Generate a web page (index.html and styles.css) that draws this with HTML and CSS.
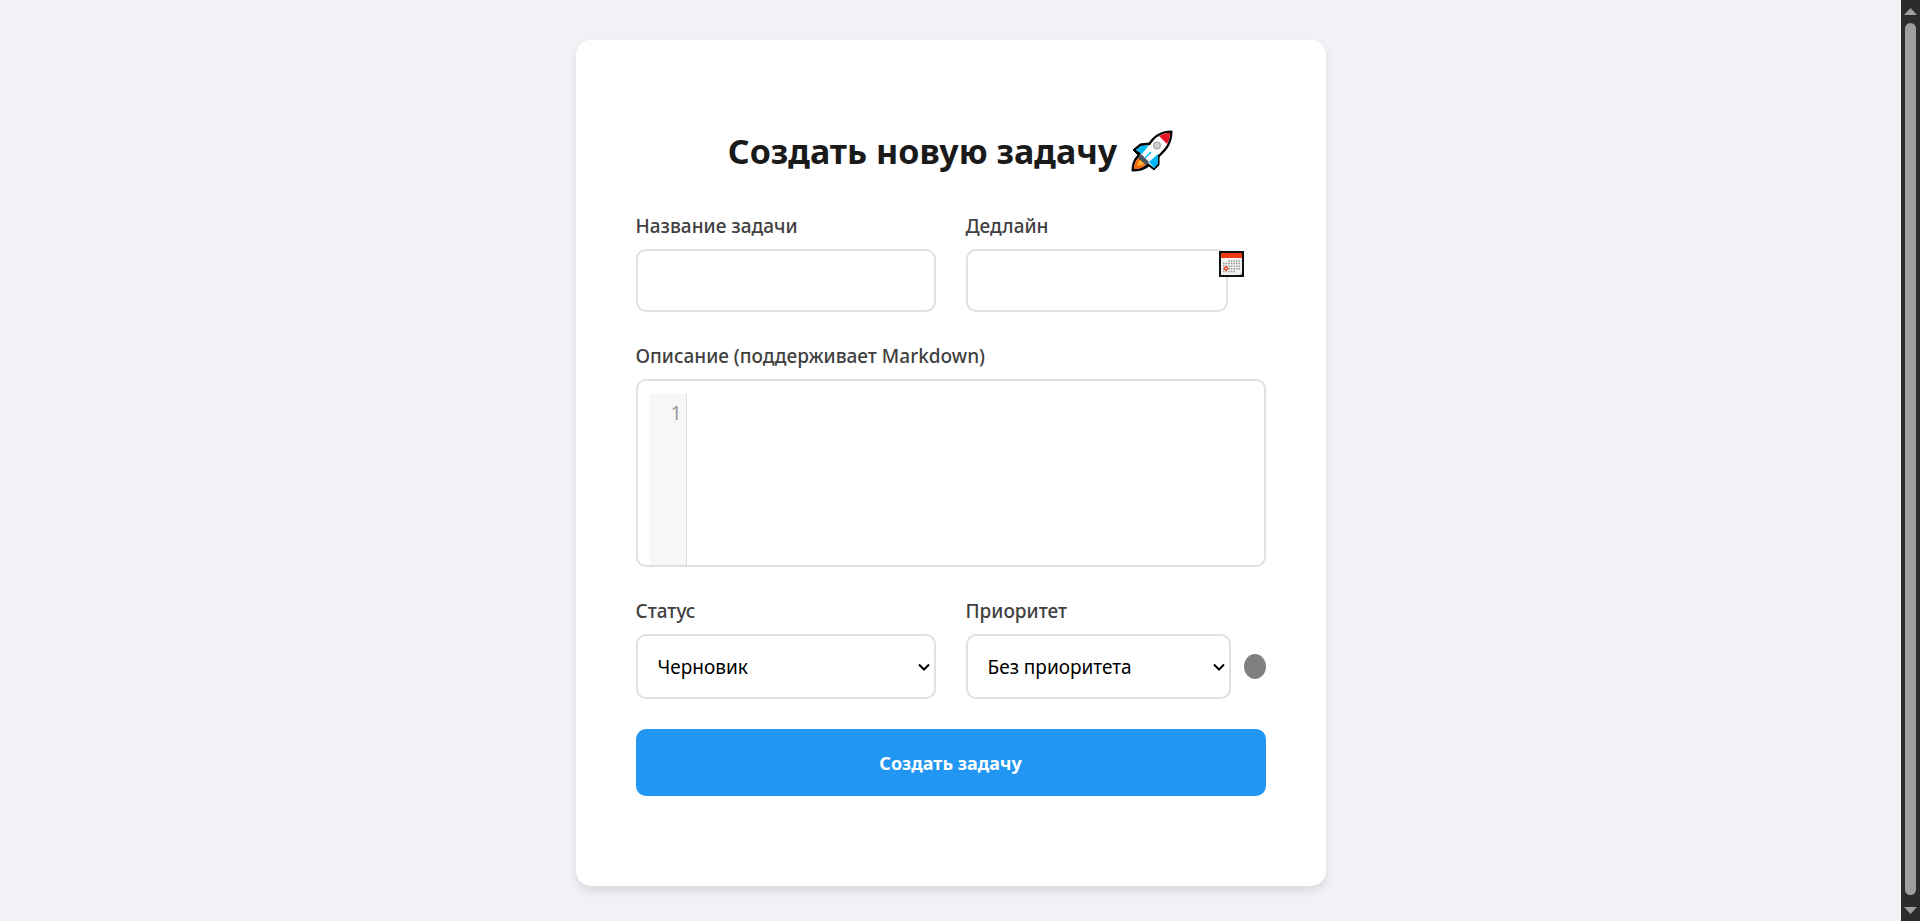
FILE: index.html
```html
<!DOCTYPE html>
<html lang="ru">
<head>
<meta charset="utf-8">
<meta name="viewport" content="width=device-width, initial-scale=1">
<title>Создать новую задачу</title>
<link rel="stylesheet" href="styles.css">
</head>
<body>
<div class="app">
  <main class="page">
    <section class="card">
      <h1 class="title">Создать новую задачу
        <svg class="rocket" viewBox="0 0 42 42" aria-hidden="true">
          <path d="M41 1C32 1 24 4 18 13L9 14 2 20 7 25C3 29 1 34 1 41 8 41 13 40 18 36L23 40 28 35V27C36 20 41 13 41 1Z" fill="#000" stroke="#000"/>
          <path d="M39 3C31 3 25 6 19 15L10 16 5 20 10 23 8 27C5 30 3 34 3 39 9 39 13 37 17 33L23 38 26 34V26C34 19 39 13 39 3Z" fill="#fff"/>
          <path d="M18 15L10 16 5 20 11 24ZM27 24V34L23 38 18 32Z" fill="#00b8f5"/>
          <path d="M39 3C35 3 31 4 28 6L36 14C38 11 39 7 39 3Z" fill="#e81224"/>
          <path d="M8 27C5 30 3 34 3 39 9 39 13 37 16 33Z" fill="#f7630c"/>
          <path d="M8 30L6 36 12 35 14 32Z" fill="#ffb02e"/>
          <path d="M10 24L18 32 15 35 7 28Z" fill="#4a5459"/>
          <path d="M14 28L20 22" stroke="#00b8f5" stroke-width="1.5"/>
          <circle cx="26" cy="15.500" r="3.400" fill="#ccc" stroke="#aaa" stroke-width="1.200"/>
        </svg>
      </h1>
      <form class="form">
        <div class="row">
          <div class="field">
            <label class="label" for="name">Название задачи</label>
            <input class="control" id="name" type="text">
          </div>
          <div class="field">
            <label class="label" for="deadline">Дедлайн</label>
            <div class="date">
              <input class="control" id="deadline" type="text">
              <button class="date-button" type="button" aria-label="Открыть календарь">
                <svg class="calendar" viewBox="0 0 25 26" aria-hidden="true">
                  <path d="M0 0H25V26H0Z" fill="#111"/>
                  <path d="M2 7H23V24H2Z" fill="#f2f2f2"/>
                  <path d="M2 2H23V7H2Z" fill="#f03a17"/>
                  <path d="M9.200 10H21.500M4 12.600H21.500M4 15.200H21.500M4 17.800H21.500M4 20.400H16" stroke="#999" stroke-width="1.500" stroke-dasharray="1.500 1.100"/>
                  <path d="M7 15.500L9 17.500 7 19.500 5 17.500Z" fill="#fff" stroke="#f03a17" stroke-width="1.200"/>
                  <path d="M20 24L23 21V24Z" fill="#bbb"/>
                </svg>
              </button>
            </div>
          </div>
        </div>
        <div class="field">
          <label class="label" for="description">Описание (поддерживает Markdown)</label>
          <div class="editor">
            <div class="gutter" aria-hidden="true">1</div>
            <textarea class="code" id="description"></textarea>
          </div>
        </div>
        <div class="row">
          <div class="field">
            <label class="label" for="status">Статус</label>
            <div class="select">
              <select class="control select-box" id="status"><option>Черновик</option></select>
              <svg class="chevron" viewBox="0 0 12 8" aria-hidden="true"><path d="M1 1.500L6 6.500 11 1.500"/></svg>
            </div>
          </div>
          <div class="field">
            <label class="label" for="priority">Приоритет</label>
            <div class="priority">
              <div class="select">
                <select class="control select-box" id="priority"><option>Без приоритета</option></select>
                <svg class="chevron" viewBox="0 0 12 8" aria-hidden="true"><path d="M1 1.500L6 6.500 11 1.500"/></svg>
              </div>
              <span class="dot"></span>
            </div>
          </div>
        </div>
        <button class="submit" type="submit">Создать задачу</button>
      </form>
    </section>
  </main>
  <div class="scrollbar" aria-hidden="true">
    <svg class="arrow" viewBox="0 0 13 7"><path d="M0 7L6.500 0 13 7Z"/></svg>
    <div class="thumb"></div>
    <svg class="arrow" viewBox="0 0 13 7"><path d="M0 0L6.500 7 13 0Z"/></svg>
  </div>
</div>
</body>
</html>
```
FILE: styles.css
```css
* { box-sizing: border-box; }

body {
  margin: 0;
  background: #f0f2f6;
  font-family: "Noto Sans", "Open Sans", sans-serif;
  font-size: 19px;
  color: #1a1a1a;
}

.app { display: flex; height: 100vh; }

.page { flex: 1; padding: 40px 20px 0; overflow: hidden; }

.card {
  max-width: 750px;
  margin: 0 auto;
  padding: 88px 60px 90px;
  background: #fff;
  border-radius: 15px;
  box-shadow: 0 5px 10px rgba(0, 0, 0, 0.1);
}

.title {
  display: flex;
  justify-content: center;
  align-items: center;
  gap: 14px;
  margin: 0 0 38px;
  font-size: 34px;
  line-height: 46px;
  font-weight: 700;
}

.rocket { width: 42px; height: 42px; flex: none; }

.form { display: flex; flex-direction: column; gap: 30px; }

.row { display: grid; grid-template-columns: 1fr 1fr; gap: 30px; }

.field { display: flex; flex-direction: column; gap: 8px; min-width: 0; }

.label { line-height: 29px; font-weight: 500; color: #404040; }

.control {
  width: 100%;
  min-width: 0;
  height: 63px;
  padding: 0 20px;
  border: 2px solid #e0e0e0;
  border-radius: 10px;
  background: #fff;
  font: inherit;
  color: #000;
}

.date { display: flex; align-items: flex-start; padding-right: 22px; }

.date-button {
  flex: none;
  margin: 2px 0 0 -9px;
  padding: 0;
  border: 0;
  background: none;
  z-index: 1;
}

.calendar { display: block; width: 25px; height: 26px; }

.editor {
  display: flex;
  height: 188px;
  padding: 13px 12px 0;
  border: 2px solid #e0e0e0;
  border-radius: 10px;
  overflow: hidden;
}

.gutter {
  width: 37px;
  padding: 4px 4px 0 0;
  border-right: 1px solid #ddd;
  background: #f7f7f7;
  color: #999;
  line-height: 30px;
  text-align: right;
}

.code {
  flex: 1;
  padding: 5px;
  border: 0;
  resize: none;
  background: none;
  font: inherit;
  line-height: 30px;
}

.select { display: grid; flex: 1; align-items: center; min-width: 0; }

.select-box { grid-area: 1 / 1; height: 65px; appearance: none; }

.chevron {
  grid-area: 1 / 1;
  justify-self: end;
  width: 12px;
  height: 8px;
  margin-right: 6px;
  fill: none;
  stroke: #000;
  stroke-width: 2;
  pointer-events: none;
}

.priority { display: flex; align-items: center; gap: 13px; }

.dot { width: 22px; height: 25px; border-radius: 50%; background: #808080; }

.submit {
  height: 67px;
  border: 0;
  border-radius: 10px;
  background: #2196f3;
  color: #fff;
  font: inherit;
  font-size: 18px;
  font-weight: 700;
}

.scrollbar {
  display: flex;
  flex-direction: column;
  align-items: center;
  gap: 8px;
  width: 19px;
  padding: 8px 0 7px;
  background: #2c2c2c;
}

.arrow { width: 13px; height: 7px; fill: #9f9f9f; }

.thumb { flex: 1; width: 11px; margin-bottom: 4px; border-radius: 6px; background: #9f9f9f; }
```
